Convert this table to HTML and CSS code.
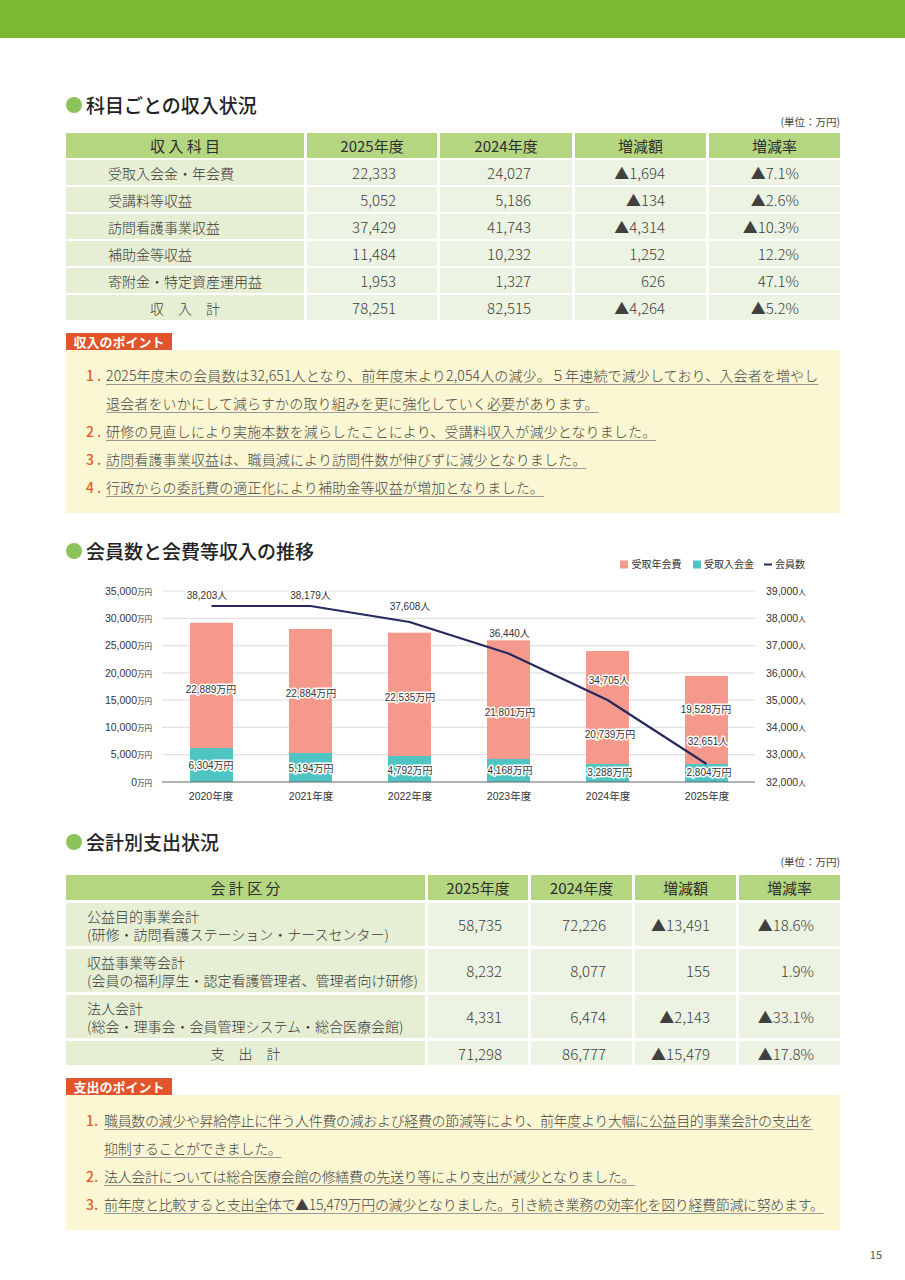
FILE: index.html
```html
<!DOCTYPE html>
<html lang="ja">
<head>
<meta charset="utf-8">
<title>収支状況</title>
<link rel="stylesheet" href="styles.css">
</head>
<body>
<header class="topbar"></header>
<main class="page">
  <section class="sec sec-income">
    <h2 class="sec-title">科目ごとの収入状況</h2>
    <p class="unit">(単位：万円)</p>
    <div class="tbl tbl-income">
      <div class="c th">収 入 科 目</div>
      <div class="c th">2025年度</div>
      <div class="c th">2024年度</div>
      <div class="c th">増減額</div>
      <div class="c th">増減率</div>

      <div class="c lbl">受取入会金・年会費</div>
      <div class="c num">22,333</div>
      <div class="c num">24,027</div>
      <div class="c num">▲1,694</div>
      <div class="c num">▲7.1%</div>

      <div class="c lbl">受講料等収益</div>
      <div class="c num">5,052</div>
      <div class="c num">5,186</div>
      <div class="c num">▲134</div>
      <div class="c num">▲2.6%</div>

      <div class="c lbl">訪問看護事業収益</div>
      <div class="c num">37,429</div>
      <div class="c num">41,743</div>
      <div class="c num">▲4,314</div>
      <div class="c num">▲10.3%</div>

      <div class="c lbl">補助金等収益</div>
      <div class="c num">11,484</div>
      <div class="c num">10,232</div>
      <div class="c num">1,252</div>
      <div class="c num">12.2%</div>

      <div class="c lbl">寄附金・特定資産運用益</div>
      <div class="c num">1,953</div>
      <div class="c num">1,327</div>
      <div class="c num">626</div>
      <div class="c num">47.1%</div>

      <div class="c lbl total">収　入　計</div>
      <div class="c num">78,251</div>
      <div class="c num">82,515</div>
      <div class="c num">▲4,264</div>
      <div class="c num">▲5.2%</div>
    </div>

    <div class="tag">収入のポイント</div>
    <ol class="points points-wide">
      <li><span class="pn">1.</span><span class="pt"><span class="u">2025年度末の会員数は32,651人となり、前年度末より2,054人の減少。５年連続で減少しており、入会者を増やし</span><br><span class="u">退会者をいかにして減らすかの取り組みを更に強化していく必要があります。</span></span></li>
      <li><span class="pn">2.</span><span class="pt"><span class="u">研修の見直しにより実施本数を減らしたことにより、受講料収入が減少となりました。</span></span></li>
      <li><span class="pn">3.</span><span class="pt"><span class="u">訪問看護事業収益は、職員減により訪問件数が伸びずに減少となりました。</span></span></li>
      <li><span class="pn">4.</span><span class="pt"><span class="u">行政からの委託費の適正化により補助金等収益が増加となりました。</span></span></li>
    </ol>
  </section>

  <section class="sec sec-chart">
    <h2 class="sec-title">会員数と会費等収入の推移</h2>
    <svg class="chart" viewBox="66 553 774 257" width="774" height="257" xmlns="http://www.w3.org/2000/svg">
      <g class="legend">
        <rect x="620" y="560.5" width="8" height="8" fill="#f4998b"/>
        <text class="lg" x="631.5" y="568">受取年会費</text>
        <rect x="693" y="560.5" width="8" height="8" fill="#4ec5c3"/>
        <text class="lg" x="704" y="568">受取入会金</text>
        <line x1="764" y1="564.5" x2="772" y2="564.5" stroke="#26285e" stroke-width="2"/>
        <text class="lg" x="775" y="568">会員数</text>
      </g>
      <g class="grid">
        <line x1="162" y1="591" x2="755" y2="591"/>
        <line x1="162" y1="618.3" x2="755" y2="618.3"/>
        <line x1="162" y1="645.6" x2="755" y2="645.6"/>
        <line x1="162" y1="672.9" x2="755" y2="672.9"/>
        <line x1="162" y1="700.1" x2="755" y2="700.1"/>
        <line x1="162" y1="727.4" x2="755" y2="727.4"/>
        <line x1="162" y1="754.7" x2="755" y2="754.7"/>
      </g>
      <g class="ax ax-left">
        <text x="152" y="594.7">35,000<tspan class="ax-u">万円</tspan></text>
        <text x="152" y="622">30,000<tspan class="ax-u">万円</tspan></text>
        <text x="152" y="649.3">25,000<tspan class="ax-u">万円</tspan></text>
        <text x="152" y="676.6">20,000<tspan class="ax-u">万円</tspan></text>
        <text x="152" y="703.8">15,000<tspan class="ax-u">万円</tspan></text>
        <text x="152" y="731.1">10,000<tspan class="ax-u">万円</tspan></text>
        <text x="152" y="758.4">5,000<tspan class="ax-u">万円</tspan></text>
        <text x="152" y="785.7">0<tspan class="ax-u">万円</tspan></text>
      </g>
      <g class="ax ax-right">
        <text x="766" y="594.7">39,000<tspan class="ax-u">人</tspan></text>
        <text x="766" y="622">38,000<tspan class="ax-u">人</tspan></text>
        <text x="766" y="649.3">37,000<tspan class="ax-u">人</tspan></text>
        <text x="766" y="676.6">36,000<tspan class="ax-u">人</tspan></text>
        <text x="766" y="703.8">35,000<tspan class="ax-u">人</tspan></text>
        <text x="766" y="731.1">34,000<tspan class="ax-u">人</tspan></text>
        <text x="766" y="758.4">33,000<tspan class="ax-u">人</tspan></text>
        <text x="766" y="785.7">32,000<tspan class="ax-u">人</tspan></text>
      </g>
      <g class="bars">
        <rect class="b-fee" x="190" y="622.7" width="43" height="125.3"/>
        <rect class="b-ent" x="190" y="748" width="43" height="34"/>
        <rect class="b-fee" x="289" y="629" width="43" height="124"/>
        <rect class="b-ent" x="289" y="753" width="43" height="29"/>
        <rect class="b-fee" x="388" y="632.7" width="43" height="123.3"/>
        <rect class="b-ent" x="388" y="756" width="43" height="26"/>
        <rect class="b-fee" x="487" y="640.3" width="43" height="118.7"/>
        <rect class="b-ent" x="487" y="759" width="43" height="23"/>
        <rect class="b-fee" x="586" y="651" width="43" height="113"/>
        <rect class="b-ent" x="586" y="764" width="43" height="18"/>
        <rect class="b-fee" x="685" y="676" width="43" height="88"/>
        <rect class="b-ent" x="685" y="764" width="43" height="18"/>
      </g>
      <line class="baseline" x1="162" y1="782" x2="755" y2="782"/>
      <polyline class="members" points="211.5,606 310.5,606 409.5,622 508.5,653.5 607.5,700 706.5,764"/>
      <g class="bl">
        <text x="207" y="598.5">38,203人</text>
        <text x="310.5" y="598.5">38,179人</text>
        <text x="410" y="610.2">37,608人</text>
        <text x="509.5" y="637.2">36,440人</text>
        <text x="609" y="684.2">34,705人</text>
        <text x="708" y="745.2">32,651人</text>
        <text x="211" y="692.5">22,889万円</text>
        <text x="311" y="696.5">22,884万円</text>
        <text x="410" y="700.8">22,535万円</text>
        <text x="510" y="716.2">21,801万円</text>
        <text x="610" y="737.8">20,739万円</text>
        <text x="706" y="712.8">19,528万円</text>
        <text x="211" y="768.5">6,304万円</text>
        <text x="311" y="771.8">5,194万円</text>
        <text x="410" y="773.5">4,792万円</text>
        <text x="510" y="773.5">4,168万円</text>
        <text x="609.7" y="775.5">3,288万円</text>
        <text x="709" y="775.5">2,804万円</text>
      </g>
      <g class="xl">
        <text x="211" y="799.7">2020年度</text>
        <text x="311" y="799.7">2021年度</text>
        <text x="410" y="799.7">2022年度</text>
        <text x="509" y="799.7">2023年度</text>
        <text x="608" y="799.7">2024年度</text>
        <text x="707" y="799.7">2025年度</text>
      </g>
    </svg>
  </section>

  <section class="sec sec-expense">
    <h2 class="sec-title">会計別支出状況</h2>
    <p class="unit unit-loose">(単位：万円)</p>
    <div class="tbl tbl-expense">
      <div class="c th">会 計 区 分</div>
      <div class="c th">2025年度</div>
      <div class="c th">2024年度</div>
      <div class="c th">増減額</div>
      <div class="c th">増減率</div>

      <div class="c lbl lbl2"><span>公益目的事業会計<br>(研修・訪問看護ステーション・ナースセンター)</span></div>
      <div class="c num">58,735</div>
      <div class="c num">72,226</div>
      <div class="c num">▲13,491</div>
      <div class="c num">▲18.6%</div>

      <div class="c lbl lbl2"><span>収益事業等会計<br>(会員の福利厚生・認定看護管理者、管理者向け研修)</span></div>
      <div class="c num">8,232</div>
      <div class="c num">8,077</div>
      <div class="c num">155</div>
      <div class="c num">1.9%</div>

      <div class="c lbl lbl2"><span>法人会計<br>(総会・理事会・会員管理システム・総合医療会館)</span></div>
      <div class="c num">4,331</div>
      <div class="c num">6,474</div>
      <div class="c num">▲2,143</div>
      <div class="c num">▲33.1%</div>

      <div class="c lbl total">支　出　計</div>
      <div class="c num">71,298</div>
      <div class="c num">86,777</div>
      <div class="c num">▲15,479</div>
      <div class="c num">▲17.8%</div>
    </div>

    <div class="tag">支出のポイント</div>
    <ol class="points points-tight">
      <li><span class="pn">1.</span><span class="pt"><span class="u">職員数の減少や昇給停止に伴う人件費の減および経費の節減等により、前年度より大幅に公益目的事業会計の支出を</span><br><span class="u">抑制することができました。</span></span></li>
      <li><span class="pn">2.</span><span class="pt"><span class="u">法人会計については総合医療会館の修繕費の先送り等により支出が減少となりました。</span></span></li>
      <li><span class="pn">3.</span><span class="pt"><span class="u">前年度と比較すると支出全体で▲15,479万円の減少となりました。引き続き業務の効率化を図り経費節減に努めます。</span></span></li>
    </ol>
  </section>
</main>
<footer class="pageno">15</footer>
</body>
</html>
```

FILE: styles.css
```css
* { box-sizing: border-box; }
html, body { margin: 0; padding: 0; background: #fff; }
body {
  width: 905px;
  font-family: "Noto Sans CJK JP", "Noto Sans", sans-serif;
  color: #333;
}
.topbar { height: 38px; background: #7cb832; }
.page { padding: 0 65px 0 66px; }

.sec-title {
  margin: 0;
  display: flex;
  align-items: center;
  gap: 4px;
  font-size: 19px;
  line-height: 24px;
  font-weight: 500;
  color: #222;
}
.sec-title::before {
  content: "";
  flex: none;
  width: 16px;
  height: 16px;
  border-radius: 50%;
  background: #8dc35a;
}
.sec-income .sec-title { margin-top: 55px; }
.sec-chart .sec-title { margin-top: 26px; }
.sec-expense .sec-title { margin-top: 20px; }

.unit {
  margin: -3px 0 0;
  text-align: right;
  font-size: 10.5px;
  line-height: 15px;
  color: #444;
}
.unit-loose { margin-top: 0; }

.tbl { display: grid; }
.tbl-income {
  margin-top: 4px;
  grid-template-columns: 238px 130px 132px 131px 131px;
  grid-auto-rows: 25px;
  gap: 2px 3px;
}
.tbl-expense {
  margin-top: 6px;
  grid-template-columns: 359px 100px 101px 101px 101px;
  grid-template-rows: 25px 43px 43px 43px 24px;
  gap: 3px 3px;
}
.c { display: flex; align-items: center; white-space: nowrap; }
.th { justify-content: center; background: #b5d681; font-size: 15px; color: #2e2e2e; font-weight: 400; }
.lbl { background: #e6eed4; font-size: 14px; color: #3a3a3a; font-weight: 300; }
.num { background: #edf3e2; justify-content: flex-end; font-size: 15px; color: #404040; font-weight: 300; }
.tbl-income .lbl { padding-left: 42px; }
.tbl-income .num { padding-right: 41px; }
.tbl-expense .lbl { padding-left: 21px; }
.tbl-expense .num { padding-right: 26px; }
.lbl2 { line-height: 18px; }
.tbl .total { justify-content: center; padding-left: 0; }

.tag {
  width: 106px;
  margin-top: 13px;
  background: #e0552b;
  color: #fff;
  font-size: 13px;
  font-weight: 700;
  line-height: 17px;
  text-align: center;
}
.points {
  list-style: none;
  margin: 0;
  padding: 11px 15px 12px 20px;
  background: #fcf7d3;
}
.points li { display: flex; font-size: 14px; line-height: 28px; }
.pn { flex: none; color: #e4572e; font-weight: 500; }
.points-wide .pn { width: 20px; letter-spacing: 3px; }
.points-wide .pt { letter-spacing: 0.15px; }
.points-tight .pn { width: 18px; }
.points-tight .pt { letter-spacing: -0.35px; }
.pt { white-space: nowrap; color: #444; font-weight: 300; }
.u {
  text-decoration: underline;
  text-decoration-color: #9a9a9a;
  text-decoration-thickness: 1px;
  text-underline-offset: 3px;
}

.chart {
  display: block;
  margin-top: -10px;
  overflow: visible;
  font-family: "Liberation Sans", "Noto Sans CJK JP", sans-serif;
}
.chart .grid line { stroke: #e2e2e2; stroke-width: 1.2; }
.chart .baseline { stroke: #666; stroke-width: 1.2; }
.chart .lg { font-size: 10px; fill: #333; font-family: "Noto Sans CJK JP", sans-serif; }
.chart .ax text { font-size: 10.5px; fill: #333; }
.chart .ax-left text { text-anchor: end; }
.chart .ax-u { font-size: 7.5px; font-family: "Noto Sans CJK JP", sans-serif; }
.chart .b-fee { fill: #f4998b; }
.chart .b-ent { fill: #4ec5c3; }
.chart .members { fill: none; stroke: #26285e; stroke-width: 2.2; stroke-linejoin: round; }
.chart .bl text {
  font-size: 10px;
  fill: #333;
  stroke: #fff;
  stroke-width: 3px;
  stroke-linejoin: round;
  paint-order: stroke;
  text-anchor: middle;
}
.chart .xl text { font-size: 10.5px; fill: #333; text-anchor: middle; }

.pageno {
  margin-top: 17px;
  padding-right: 23px;
  text-align: right;
  font-size: 11px;
  line-height: 14px;
  color: #555;
}
```
